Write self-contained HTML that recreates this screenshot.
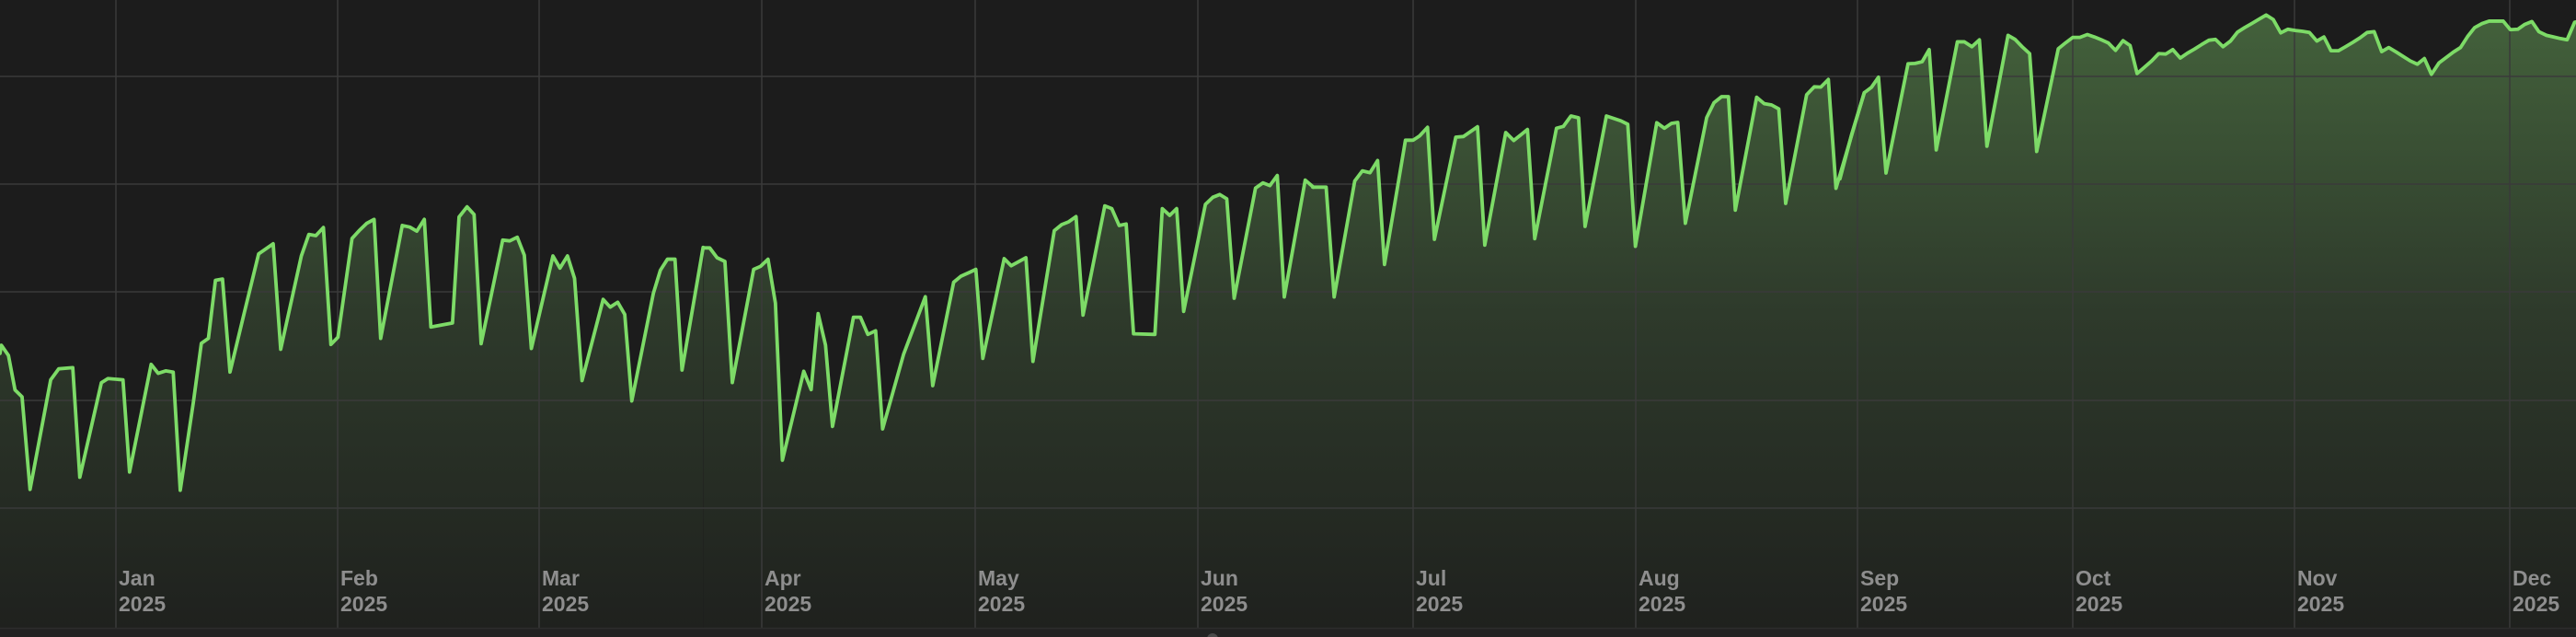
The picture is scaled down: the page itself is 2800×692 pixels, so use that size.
<!DOCTYPE html>
<html><head><meta charset="utf-8"><style>
html,body{margin:0;padding:0;background:#1c1c1c;}
svg{display:block}
text{font-family:"Liberation Sans",sans-serif;font-weight:bold;font-size:23px;fill:#8e8e8e}
</style></head><body>
<svg width="2800" height="692" viewBox="0 0 2800 692" xmlns="http://www.w3.org/2000/svg">
<defs>
<linearGradient id="g" x1="0" y1="0" x2="0" y2="682" gradientUnits="userSpaceOnUse">
<stop offset="0" stop-color="#44633c"/>
<stop offset="0.5" stop-color="#2e3a2b"/>
<stop offset="1" stop-color="#1f211e"/>
</linearGradient>
<clipPath id="c">
<polygon transform="scale(0.5102,0.4413)" points="-10,870 0,870 3,850 18,875 32,960 47,977 64,1205 108,935 125,908 155,905 170,1175 216,942 230,932 262,935 276,1162 322,897 337,919 353,913 369,916 384,1207 412,990 429,845 444,833 459,690 474,687 490,916 520,772 551,625 582,600 598,860 642,630 658,577 673,580 689,560 705,848 720,830 750,587 765,568 781,550 797,540 811,833 857,555 873,559 888,569 904,540 918,805 964,795 978,534 995,509 1010,528 1025,846 1071,591 1086,593 1102,584 1117,628 1132,858 1178,630 1193,660 1209,630 1224,685 1240,937 1285,737 1300,756 1316,744 1331,774 1346,987 1392,722 1407,665 1422,638 1438,638 1453,911 1498,609 1498,1545 -10,1545"/>
<polygon transform="translate(750,50) scale(0.4464,0.3333)" points="33,658 48,658 66,690 85,702 103,1097 155,728 172,718 190,695 208,838 225,1350 277,1060 295,1120 312,872 330,975 347,1240 398,884 415,884 433,940 452,928 469,1248 520,1005 573,817 591,1107 642,770 660,750 680,738 696,728 713,1018 765,693 782,716 800,703 818,690 835,1028 887,602 905,582 922,573 940,556 957,877 1010,521 1027,530 1045,585 1062,580 1080,938 1132,940 1150,530 1168,552 1185,530 1202,865 1255,516 1273,493 1290,484 1307,498 1325,822 1377,463 1395,446 1412,455 1430,422 1447,818 1498,437 1518,460 1518,1896 33,1896"/>
<polygon transform="translate(1400,0) scale(0.4145,0.3333)" points="65,610 100,610 121,968 175,590 195,557 215,563 235,523 253,862 308,457 328,457 345,443 366,415 384,780 440,447 460,445 497,413 516,799 571,432 592,458 628,422 647,778 704,418 722,412 742,378 762,384 779,738 835,378 873,394 891,405 911,803 967,400 987,418 1006,402 1022,399 1042,728 1098,383 1117,335 1137,315 1155,315 1173,685 1229,317 1249,338 1268,342 1287,355 1305,663 1360,309 1380,283 1397,284 1417,259 1437,614 1511,302 1511,2046 65,2046"/>
<polygon transform="translate(2000,0) scale(0.5102,0.4413)" points="0,440 25,330 52,228 67,215 82,190 98,426 145,157 160,156 175,152 190,122 205,369 250,103 265,103 281,115 297,98 313,360 358,87 373,97 388,115 404,132 419,373 465,120 481,105 496,92 511,92 527,85 542,91 557,98 572,106 587,124 603,100 618,112 633,181 648,166 664,150 679,132 694,133 709,122 725,143 740,131 755,121 770,110 786,99 800,97 816,115 832,101 847,79 862,68 877,58 893,47 908,37 923,48 939,81 954,72 970,75 985,77 1000,80 1016,101 1031,91 1046,125 1062,125 1077,115 1093,104 1108,93 1123,80 1138,78 1154,127 1169,117 1185,128 1200,139 1215,150 1230,158 1245,144 1260,183 1276,155 1291,142 1307,128 1322,117 1337,90 1352,68 1368,58 1383,52 1398,52 1413,52 1428,73 1444,72 1459,60 1474,53 1489,78 1505,87 1520,91 1535,95 1549,98 1565,55 1600,45 1600,1545 0,1545"/>
</clipPath>
</defs>
<rect x="0" y="0" width="2800" height="692" fill="#1c1c1c"/>
<rect x="0" y="0" width="2800" height="682" fill="url(#g)" clip-path="url(#c)"/>
<g stroke="#3a3a3a" stroke-width="1.5">
<line x1="0" y1="83" x2="2800" y2="83"/>
<line x1="0" y1="200" x2="2800" y2="200"/>
<line x1="0" y1="317" x2="2800" y2="317"/>
<line x1="0" y1="435" x2="2800" y2="435"/>
<line x1="0" y1="552" x2="2800" y2="552"/>
<line x1="126" y1="0" x2="126" y2="682"/>
<line x1="367" y1="0" x2="367" y2="682"/>
<line x1="586" y1="0" x2="586" y2="682"/>
<line x1="828" y1="0" x2="828" y2="682"/>
<line x1="1060" y1="0" x2="1060" y2="682"/>
<line x1="1302" y1="0" x2="1302" y2="682"/>
<line x1="1536" y1="0" x2="1536" y2="682"/>
<line x1="1778" y1="0" x2="1778" y2="682"/>
<line x1="2019" y1="0" x2="2019" y2="682"/>
<line x1="2253" y1="0" x2="2253" y2="682"/>
<line x1="2494" y1="0" x2="2494" y2="682"/>
<line x1="2728" y1="0" x2="2728" y2="682"/>
</g>
<g fill="none" stroke="#7ddb67" stroke-width="3.8" stroke-linejoin="round" stroke-linecap="round">
<polyline vector-effect="non-scaling-stroke" transform="scale(0.5102,0.4413)" points="-10,870 0,870 3,850 18,875 32,960 47,977 64,1205 108,935 125,908 155,905 170,1175 216,942 230,932 262,935 276,1162 322,897 337,919 353,913 369,916 384,1207 412,990 429,845 444,833 459,690 474,687 490,916 520,772 551,625 582,600 598,860 642,630 658,577 673,580 689,560 705,848 720,830 750,587 765,568 781,550 797,540 811,833 857,555 873,559 888,569 904,540 918,805 964,795 978,534 995,509 1010,528 1025,846 1071,591 1086,593 1102,584 1117,628 1132,858 1178,630 1193,660 1209,630 1224,685 1240,937 1285,737 1300,756 1316,744 1331,774 1346,987 1392,722 1407,665 1422,638 1438,638 1453,911 1498,609"/>
<polyline vector-effect="non-scaling-stroke" transform="translate(750,50) scale(0.4464,0.3333)" points="33,658 48,658 66,690 85,702 103,1097 155,728 172,718 190,695 208,838 225,1350 277,1060 295,1120 312,872 330,975 347,1240 398,884 415,884 433,940 452,928 469,1248 520,1005 573,817 591,1107 642,770 660,750 680,738 696,728 713,1018 765,693 782,716 800,703 818,690 835,1028 887,602 905,582 922,573 940,556 957,877 1010,521 1027,530 1045,585 1062,580 1080,938 1132,940 1150,530 1168,552 1185,530 1202,865 1255,516 1273,493 1290,484 1307,498 1325,822 1377,463 1395,446 1412,455 1430,422 1447,818 1498,437 1518,460"/>
<polyline vector-effect="non-scaling-stroke" transform="translate(1400,0) scale(0.4145,0.3333)" points="65,610 100,610 121,968 175,590 195,557 215,563 235,523 253,862 308,457 328,457 345,443 366,415 384,780 440,447 460,445 497,413 516,799 571,432 592,458 628,422 647,778 704,418 722,412 742,378 762,384 779,738 835,378 873,394 891,405 911,803 967,400 987,418 1006,402 1022,399 1042,728 1098,383 1117,335 1137,315 1155,315 1173,685 1229,317 1249,338 1268,342 1287,355 1305,663 1360,309 1380,283 1397,284 1417,259 1437,614 1511,302"/>
<polyline vector-effect="non-scaling-stroke" transform="translate(2000,0) scale(0.5102,0.4413)" points="0,440 25,330 52,228 67,215 82,190 98,426 145,157 160,156 175,152 190,122 205,369 250,103 265,103 281,115 297,98 313,360 358,87 373,97 388,115 404,132 419,373 465,120 481,105 496,92 511,92 527,85 542,91 557,98 572,106 587,124 603,100 618,112 633,181 648,166 664,150 679,132 694,133 709,122 725,143 740,131 755,121 770,110 786,99 800,97 816,115 832,101 847,79 862,68 877,58 893,47 908,37 923,48 939,81 954,72 970,75 985,77 1000,80 1016,101 1031,91 1046,125 1062,125 1077,115 1093,104 1108,93 1123,80 1138,78 1154,127 1169,117 1185,128 1200,139 1215,150 1230,158 1245,144 1260,183 1276,155 1291,142 1307,128 1322,117 1337,90 1352,68 1368,58 1383,52 1398,52 1413,52 1428,73 1444,72 1459,60 1474,53 1489,78 1505,87 1520,91 1535,95 1549,98 1565,55 1600,45"/>
</g>
<rect x="0" y="682" width="2800" height="10" fill="#222222"/>
<line x1="0" y1="682.5" x2="2800" y2="682.5" stroke="#2c2c2c" stroke-width="1.5"/>
<circle cx="1318" cy="694" r="6" fill="#4a4a4a"/>
<g>
<text x="129" y="636">Jan</text><text x="129" y="664">2025</text>
<text x="370" y="636">Feb</text><text x="370" y="664">2025</text>
<text x="589" y="636">Mar</text><text x="589" y="664">2025</text>
<text x="831" y="636">Apr</text><text x="831" y="664">2025</text>
<text x="1063" y="636">May</text><text x="1063" y="664">2025</text>
<text x="1305" y="636">Jun</text><text x="1305" y="664">2025</text>
<text x="1539" y="636">Jul</text><text x="1539" y="664">2025</text>
<text x="1781" y="636">Aug</text><text x="1781" y="664">2025</text>
<text x="2022" y="636">Sep</text><text x="2022" y="664">2025</text>
<text x="2256" y="636">Oct</text><text x="2256" y="664">2025</text>
<text x="2497" y="636">Nov</text><text x="2497" y="664">2025</text>
<text x="2731" y="636">Dec</text><text x="2731" y="664">2025</text>
</g>
</svg>
</body></html>
